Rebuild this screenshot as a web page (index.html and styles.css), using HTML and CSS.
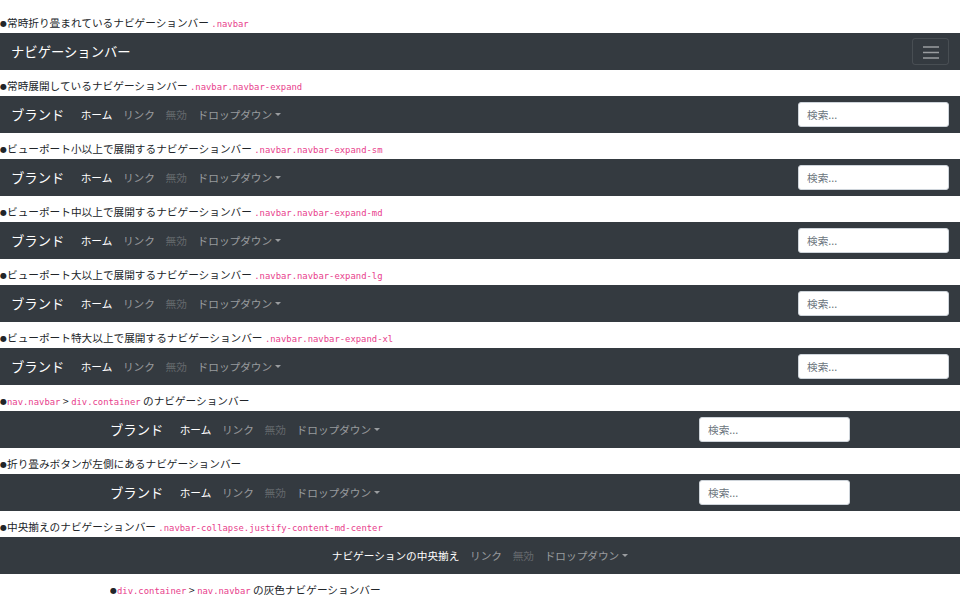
FILE: index.html
```html
<!DOCTYPE html>
<html lang="ja">
<head>
  <meta charset="UTF-8" />
  <title>ナビゲーションバー</title>
  <link rel="stylesheet" href="styles.css">
</head>
<body>
  <p class="label"><span class="dot">●</span>常時折り畳まれているナビゲーションバー <code>.navbar</code></p>
  <nav class="navbar">
    <a class="brand">ナビゲーションバー</a>
    <button class="toggler">
      <svg width="16" height="16" viewBox="0 0 16 16"><path d="M0 3h16M0 8.5h16M0 14h16" stroke="rgba(255,255,255,.5)" stroke-width="1.4"/></svg>
    </button>
  </nav>

  <p class="label"><span class="dot">●</span>常時展開しているナビゲーションバー <code>.navbar.navbar-expand</code></p>
  <nav class="navbar">
    <a class="brand">ブランド</a>
    <ul class="nav">
      <li class="active">ホーム</li><li>リンク</li><li class="disabled">無効</li><li class="dropdown">ドロップダウン</li>
    </ul>
    <input class="search" type="text" placeholder="検索...">
  </nav>

  <p class="label"><span class="dot">●</span>ビューポート小以上で展開するナビゲーションバー <code>.navbar.navbar-expand-sm</code></p>
  <nav class="navbar">
    <a class="brand">ブランド</a>
    <ul class="nav">
      <li class="active">ホーム</li><li>リンク</li><li class="disabled">無効</li><li class="dropdown">ドロップダウン</li>
    </ul>
    <input class="search" type="text" placeholder="検索...">
  </nav>

  <p class="label"><span class="dot">●</span>ビューポート中以上で展開するナビゲーションバー <code>.navbar.navbar-expand-md</code></p>
  <nav class="navbar">
    <a class="brand">ブランド</a>
    <ul class="nav">
      <li class="active">ホーム</li><li>リンク</li><li class="disabled">無効</li><li class="dropdown">ドロップダウン</li>
    </ul>
    <input class="search" type="text" placeholder="検索...">
  </nav>

  <p class="label"><span class="dot">●</span>ビューポート大以上で展開するナビゲーションバー <code>.navbar.navbar-expand-lg</code></p>
  <nav class="navbar">
    <a class="brand">ブランド</a>
    <ul class="nav">
      <li class="active">ホーム</li><li>リンク</li><li class="disabled">無効</li><li class="dropdown">ドロップダウン</li>
    </ul>
    <input class="search" type="text" placeholder="検索...">
  </nav>

  <p class="label"><span class="dot">●</span>ビューポート特大以上で展開するナビゲーションバー <code>.navbar.navbar-expand-xl</code></p>
  <nav class="navbar">
    <a class="brand">ブランド</a>
    <ul class="nav">
      <li class="active">ホーム</li><li>リンク</li><li class="disabled">無効</li><li class="dropdown">ドロップダウン</li>
    </ul>
    <input class="search" type="text" placeholder="検索...">
  </nav>

  <p class="label"><span class="dot">●</span><code>nav.navbar</code> &gt; <code>div.container</code> のナビゲーションバー</p>
  <nav class="navbar">
    <div class="container">
      <a class="brand">ブランド</a>
      <ul class="nav">
        <li class="active">ホーム</li><li>リンク</li><li class="disabled">無効</li><li class="dropdown">ドロップダウン</li>
      </ul>
      <input class="search" type="text" placeholder="検索...">
    </div>
  </nav>

  <p class="label"><span class="dot">●</span>折り畳みボタンが左側にあるナビゲーションバー</p>
  <nav class="navbar">
    <div class="container">
      <a class="brand">ブランド</a>
      <ul class="nav">
        <li class="active">ホーム</li><li>リンク</li><li class="disabled">無効</li><li class="dropdown">ドロップダウン</li>
      </ul>
      <input class="search" type="text" placeholder="検索...">
    </div>
  </nav>

  <p class="label"><span class="dot">●</span>中央揃えのナビゲーションバー <code>.navbar-collapse.justify-content-md-center</code></p>
  <nav class="navbar center">
    <ul class="nav">
      <li class="active">ナビゲーションの中央揃え</li><li>リンク</li><li class="disabled">無効</li><li class="dropdown">ドロップダウン</li>
    </ul>
  </nav>

  <div class="container block">
    <p class="label"><span class="dot">●</span><code>div.container</code> &gt; <code>nav.navbar</code> の灰色ナビゲーションバー</p>
    <nav class="navbar light">
      <a class="brand">ブランド</a>
    </nav>
  </div>
</body>
</html>
```

FILE: styles.css
```css
* { box-sizing: border-box; }
body {
  margin: 0;
  padding-top: 7px;
  font-family: "Noto Sans CJK JP", "Noto Sans", sans-serif;
  font-size: 10.67px;
  color: #212529;
  background: #fff;
}
.label {
  margin: 0;
  height: 26px;
  padding-top: 8px;
  line-height: 16px;
  white-space: nowrap;
  overflow: hidden;
}
.dot {
  font-family: "DejaVu Sans", sans-serif;
  font-size: 8px;
  vertical-align: 1px;
}
code {
  font-family: "DejaVu Sans Mono", "Liberation Mono", monospace;
  font-size: 8.9px;
  line-height: 1;
  color: #e83e8c;
}
.navbar {
  display: flex;
  align-items: center;
  height: 37px;
  padding: 0 11px;
  background: #343a40;
}
.container {
  display: flex;
  align-items: center;
  width: 740px;
  margin: 0 auto;
}
.navbar .container { height: 100%; }
.block { display: block; }
.brand {
  color: #fff;
  font-size: 13.33px;
  margin-right: 11px;
  white-space: nowrap;
}
.nav {
  display: flex;
  list-style: none;
  margin: 0;
  padding: 0;
}
.nav li {
  padding: 0 5.33px;
  color: rgba(255, 255, 255, .5);
  white-space: nowrap;
}
.nav li.active { color: #fff; }
.nav li.disabled { color: rgba(255, 255, 255, .25); }
.dropdown::after {
  content: "";
  display: inline-block;
  margin-left: 3px;
  vertical-align: 3px;
  border-top: 3.2px solid;
  border-left: 3.2px solid transparent;
  border-right: 3.2px solid transparent;
}
.search {
  margin-left: auto;
  width: 151px;
  height: 25px;
  padding: 0 8px;
  border: 1px solid #ced4da;
  border-radius: 3px;
  font-family: inherit;
  font-size: 10.67px;
  color: #495057;
}
.search::placeholder { color: #6c757d; }
.toggler {
  margin-left: auto;
  width: 37px;
  height: 27px;
  padding: 0;
  display: flex;
  align-items: center;
  justify-content: center;
  background: transparent;
  border: 1px solid rgba(255, 255, 255, .1);
  border-radius: 3px;
}
.center { justify-content: center; }
.light { background: #f8f9fa; }
.light .brand { color: rgba(0, 0, 0, .9); }
```
